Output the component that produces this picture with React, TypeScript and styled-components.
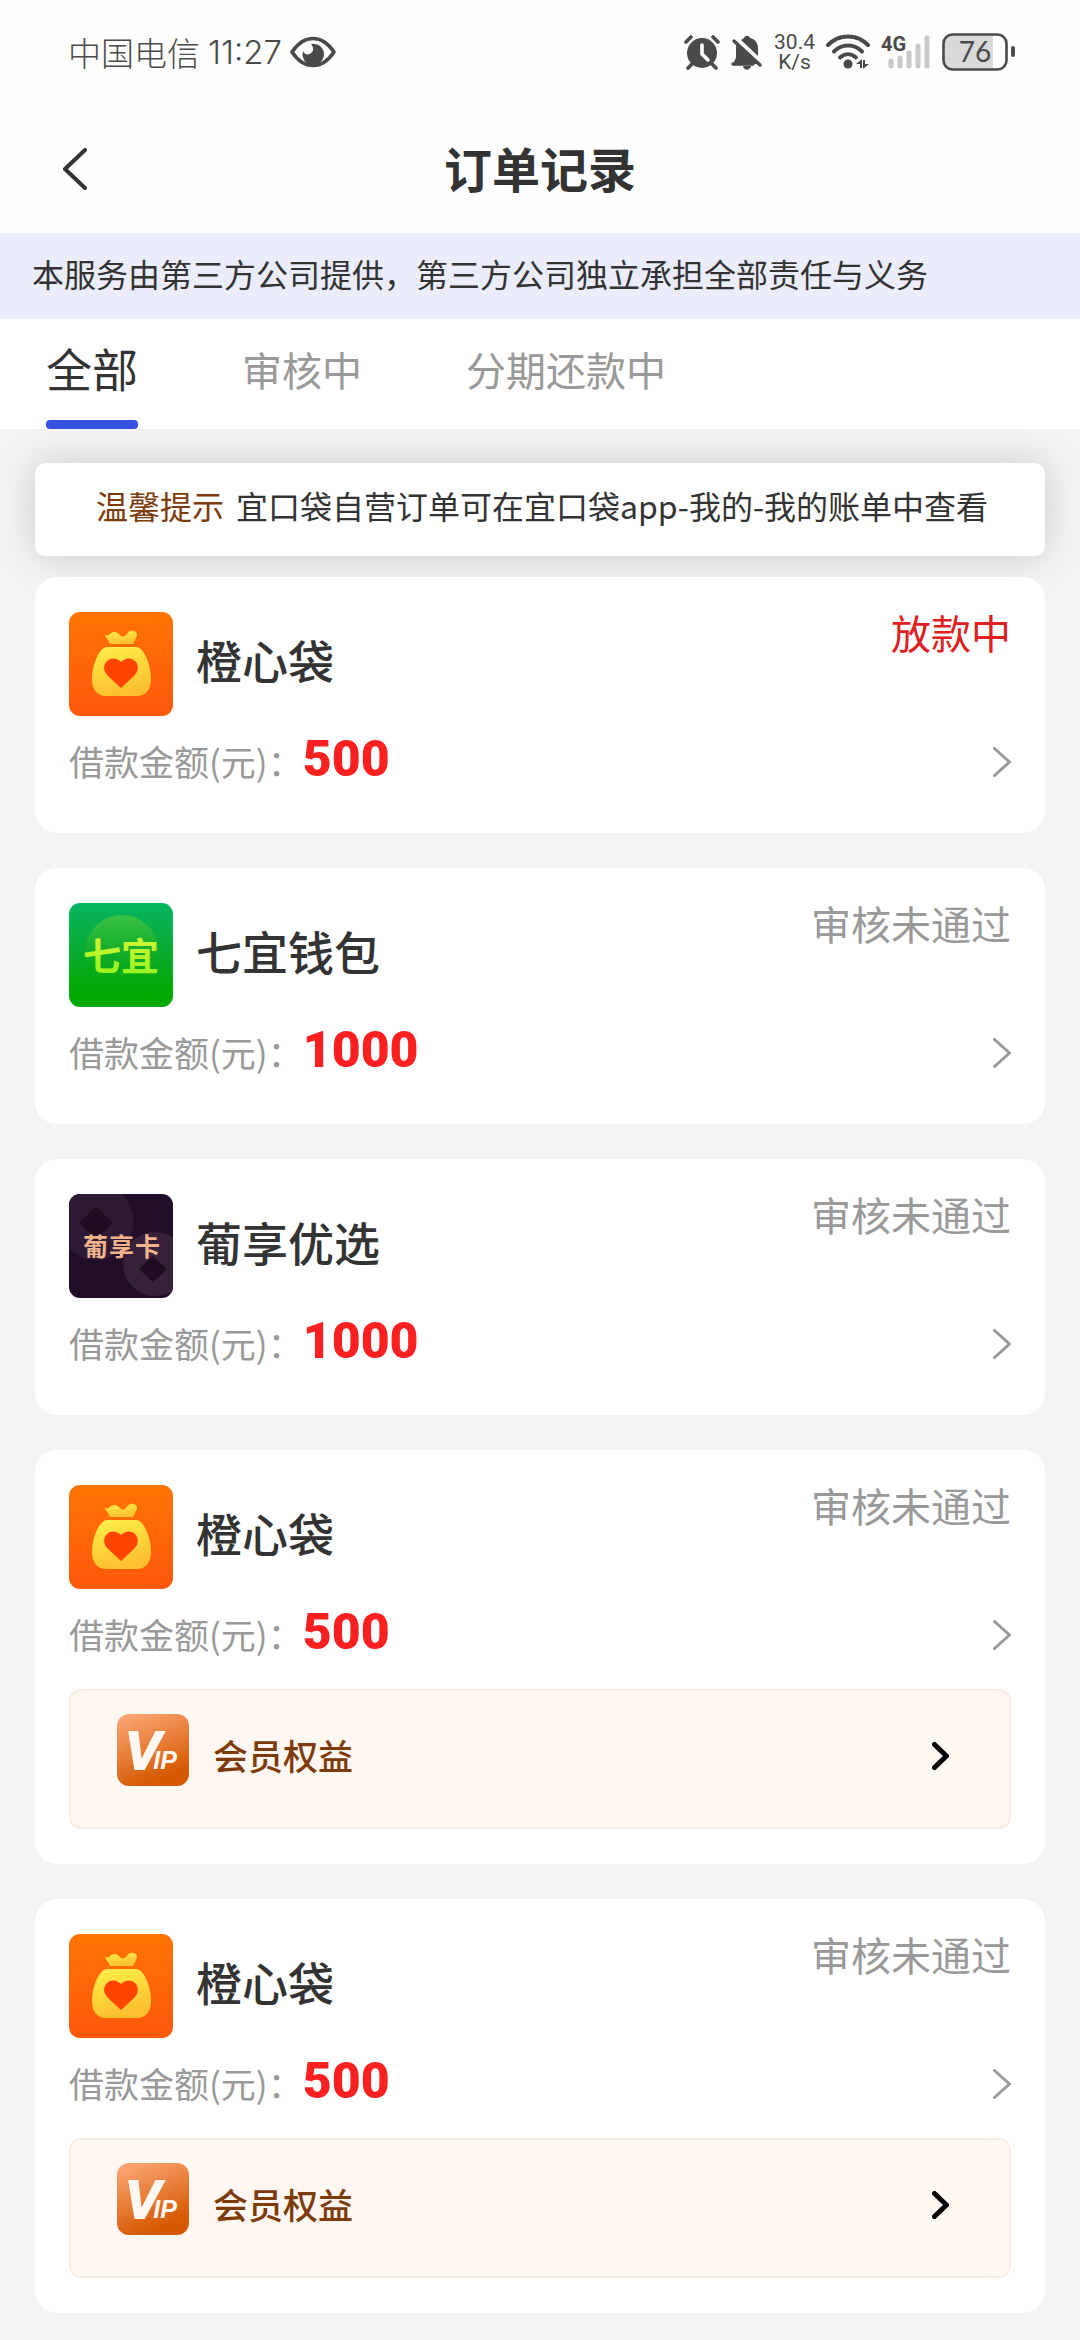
import React, { useState } from "react";
import styled, { createGlobalStyle } from "styled-components";

const GlobalStyle = createGlobalStyle`
  * { box-sizing: border-box; }
  body {
    margin: 0;
    background: #f3f3f3;
    color: #333;
    font-family: "Noto Sans CJK SC", "Noto Sans", sans-serif;
  }
  button {
    margin: 0;
    padding: 0;
    border: 0;
    background: none;
    color: inherit;
    font: inherit;
    cursor: pointer;
  }
  h1, h2, p, ul { margin: 0; padding: 0; }
  svg { display: block; flex: none; }
`;

const StatusBar = styled.div`
  display: flex;
  align-items: center;
  justify-content: space-between;
  height: 104px;
  padding: 0 65px 0 68px;
  background: #fefefe;
  color: #4a4a4a;
`;

const StatusGroup = styled.div<{ $gap: number }>`
  display: flex;
  align-items: center;
  gap: ${(p) => p.$gap}px;
`;

const Carrier = styled.span`
  font-size: 33px;
  font-weight: 300;
  line-height: 40px;
`;

const Clock = styled.span`
  font-family: Inter, Roboto, sans-serif;
  font-size: 33px;
  font-weight: 300;
  line-height: 40px;
`;

const NetSpeed = styled.span`
  display: flex;
  flex-direction: column;
  align-items: center;
  font-family: Roboto, sans-serif;
  font-size: 21px;
  line-height: 20px;
`;

const Header = styled.header`
  display: grid;
  grid-template-columns: 80px 1fr 80px;
  align-items: center;
  height: 129px;
  padding: 0 35px;
  background: #fefefe;
`;

const BackButton = styled.button`
  display: flex;
  align-items: center;
  justify-content: center;
  width: 80px;
  height: 80px;
`;

const Title = styled.h1`
  padding-bottom: 4px;
  font-size: 48px;
  font-weight: 700;
  line-height: 64px;
  text-align: center;
`;

const Notice = styled.p`
  padding: 16px 32px 22px;
  background: #ebedfd;
  font-size: 32px;
  line-height: 48px;
`;

const Tabs = styled.nav`
  display: flex;
  gap: 104px;
  height: 110px;
  padding: 0 46px;
  background: #fff;
`;

const Tab = styled.button<{ $active: boolean }>`
  display: flex;
  flex-direction: column;
  justify-content: space-between;
  padding-top: ${(p) => (p.$active ? 16 : 18)}px;
  color: ${(p) => (p.$active ? "#333" : "#999")};
  font-size: ${(p) => (p.$active ? 46 : 40)}px;
  line-height: 64px;
  white-space: nowrap;

  &::after {
    content: "";
    height: 9px;
    width: 100%;
    border-radius: 4px;
    background: ${(p) => (p.$active ? "#3451e0" : "transparent")};
  }
`;

const Content = styled.main`
  padding: 34px 35px 26px;
  overflow: hidden;
`;

const Tip = styled.p`
  display: flex;
  justify-content: center;
  gap: 12px;
  margin-bottom: 21px;
  padding: 18px 20px 27px 24px;
  border-radius: 10px;
  background: #fff;
  box-shadow: 0 0 40px rgba(0, 0, 0, 0.16);
  font-size: 32px;
  line-height: 48px;
`;

const TipLabel = styled.span`
  color: #7e3b0a;
`;

const OrderList = styled.ul`
  display: flex;
  flex-direction: column;
  gap: 35px;
  list-style: none;
`;

const Card = styled.li`
  padding: 35px 34px;
  border-radius: 22px;
  background: #fff;
`;

const CardHead = styled.div`
  display: flex;
  align-items: flex-start;
`;

const Name = styled.h2`
  flex: 1;
  padding-left: 23px;
  font-size: 46px;
  font-weight: 500;
  line-height: 94px;
`;

const Status = styled.span<{ $urgent: boolean }>`
  color: ${(p) => (p.$urgent ? "#e02020" : "#999")};
  font-size: 40px;
  line-height: 40px;
`;

const AmountRow = styled.div`
  display: flex;
  align-items: center;
  height: 73px;
  margin-top: 9px;
`;

const AmountLabel = styled.span`
  padding-bottom: 2px;
  color: #999;
  font-size: 35px;
  line-height: 64px;
`;

const Amount = styled.strong`
  flex: 1;
  padding-bottom: 6px;
  color: #fc2020;
  font-family: Roboto, sans-serif;
  font-size: 50px;
  font-weight: 900;
  line-height: 64px;
`;

const DetailButton = styled.button`
  display: flex;
  align-items: center;
  justify-content: flex-end;
  width: 60px;
  height: 60px;
`;

const VipButton = styled.button`
  display: flex;
  align-items: flex-start;
  width: 100%;
  height: 140px;
  margin-top: 18px;
  padding: 23px 60px 0 46px;
  border: 2px solid #f9ece3;
  border-radius: 12px;
  background: #fff7f1;
  text-align: left;
`;

const VipLabel = styled.span`
  flex: 1;
  padding: 11px 0 0 24px;
  color: #7e3b0a;
  font-size: 35px;
  font-weight: 500;
  line-height: 60px;
`;

const VipArrow = styled.span`
  display: flex;
  align-items: center;
  height: 84px;
`;

const EyeIcon = () => (
  <svg width="46" height="32" viewBox="0 0 46 32" aria-hidden="true">
    <path d="M2 16C8 7 15 2.5 23 2.5S38 7 44 16C38 25 31 29.5 23 29.5S8 25 2 16Z" fill="none" stroke="currentColor" strokeWidth="3.6" strokeLinejoin="round" />
    <path d="M21 8a10.500 10.500 0 0 1 5 20.500h-6A10.500 10.500 0 0 1 13 15c1 3 4 4 6.500 3 4-1.500 5-6 1.500-10Z" fill="currentColor" />
  </svg>
);

const AlarmIcon = () => (
  <svg width="36" height="35" viewBox="0 0 36 35" aria-hidden="true">
    <circle cx="18" cy="18" r="15" fill="currentColor" />
    <path d="M8 29l-4 4M28 29l4 4M2 7l5-5M34 7l-5-5" stroke="currentColor" strokeWidth="3.600" strokeLinecap="round" fill="none" />
    <path d="M18 10v9l6 6" stroke="#fff" strokeWidth="3.600" strokeLinecap="round" strokeLinejoin="round" fill="none" />
  </svg>
);

const MutedBellIcon = () => (
  <svg width="32" height="35" viewBox="0 0 32 35" aria-hidden="true">
    <path d="M3 29h24L5 10v12c0 2-2 3-2 7Z" fill="currentColor" />
    <path d="M10 5c1-1 2-1 3-2 1-3 5-3 6 0 5 1 8 5 8 10v8Z" fill="currentColor" />
    <path d="M12 31h8c-1 5-7 5-8 0Z" fill="currentColor" />
    <path d="M2 29h20M3 6l26 24" stroke="currentColor" strokeWidth="3.400" strokeLinecap="round" />
  </svg>
);

const WifiIcon = () => (
  <svg width="44" height="36" viewBox="0 0 44 36" aria-hidden="true">
    <g fill="none" stroke="currentColor" strokeWidth="4" strokeLinecap="round">
      <path d="M2 11C13-.500 31-.500 42 11" />
      <path d="M8 17.500c8-8 20-8 28 0" />
      <path d="M14 23.500c5-4.500 11-4.500 16 0" />
    </g>
    <circle cx="22" cy="30" r="4.500" fill="currentColor" />
    <path d="M30 30l6-5v9h-2v-4ZM43 30l-6 5v-9h2v4Z" fill="currentColor" />
  </svg>
);

const SignalIcon = () => (
  <svg width="50" height="49" viewBox="0 -6 50 49" aria-hidden="true">
    <g stroke="#c9c9c9" strokeWidth="5" strokeLinecap="round">
      <path d="M10 27v5M19 24v8M28 19v13M37 12v20M46 4v28" />
    </g>
    <text x="0" y="17" fill="currentColor" fontFamily="Roboto, sans-serif" fontWeight="700" fontSize="20">4G</text>
  </svg>
);

const BatteryIcon = () => (
  <svg width="73" height="38" viewBox="0 0 73 38" aria-hidden="true">
    <path d="M10 2h41v34H10a8 8 0 0 1-8-8V10a8 8 0 0 1 8-8Z" fill="#d9d9d9" />
    <rect x="1.500" y="1.500" width="63" height="35" rx="9" fill="none" stroke="currentColor" strokeWidth="2.600" />
    <rect x="69" y="13" width="4" height="11" rx="2" fill="currentColor" />
    <text x="33" y="29" textAnchor="middle" fill="currentColor" fontFamily="Lato, sans-serif" fontSize="28">76</text>
  </svg>
);

interface ChevronProps {
  width: number;
  height: number;
  stroke: number;
  color: string;
  back?: boolean;
}

const Chevron = ({ width, height, stroke, color, back }: ChevronProps) => {
  const p = stroke / 2;
  const tip = back ? p : width - p;
  const tail = back ? width - p : p;
  return (
    <svg width={width} height={height} viewBox={`0 0 ${width} ${height}`} aria-hidden="true">
      <path
        d={`M${tail} ${p}L${tip} ${height / 2}L${tail} ${height - p}`}
        fill="none"
        stroke={color}
        strokeWidth={stroke}
        strokeLinecap="round"
        strokeLinejoin="round"
      />
    </svg>
  );
};

const BagLogo = () => (
  <svg width="104" height="104" viewBox="0 0 104 104" aria-hidden="true">
    <defs>
      <linearGradient id="bagBg" x1="0" y1="0" x2="0" y2="1">
        <stop offset="0" stopColor="#ff7403" />
        <stop offset="1" stopColor="#ff580c" />
      </linearGradient>
      <linearGradient id="bagFill" x1="0" y1="0" x2="0.300" y2="1">
        <stop offset="0" stopColor="#fff04a" />
        <stop offset="1" stopColor="#fdc02f" />
      </linearGradient>
    </defs>
    <rect width="104" height="104" rx="11" fill="url(#bagBg)" />
    <path d="M36 23c3 1 4 0 6-2 3-2 6-1 8 1 2 3 5 3 7 1 2-4 5-5 8-4 3 1 4 4 2 7l-3 6H41l-2-4c-1-2-3-3-3-5Z" fill="url(#bagFill)" />
    <path d="M38 35h29c3 0 6 3 8 6 4 7 7 16 7 26 0 11-6 17-14 17H37c-8 0-14-6-14-17 0-10 3-19 7-26 2-3 5-6 8-6Z" fill="url(#bagFill)" />
    <path d="M52 76L39 64c-5-5-5-11-1-15 4-4 10-3 14 1 4-4 10-5 14-1 4 4 4 10-1 15Z" fill="#ff4500" />
  </svg>
);

const QiyiLogo = () => (
  <svg width="104" height="104" viewBox="0 0 104 104" aria-hidden="true">
    <defs>
      <linearGradient id="qiyiBg" x1="0" y1="0" x2="0" y2="1">
        <stop offset="0" stopColor="#06b562" />
        <stop offset="0.500" stopColor="#08aa2c" />
        <stop offset="0.850" stopColor="#02a902" />
      </linearGradient>
      <linearGradient id="qiyiMoon" x1="0" y1="0" x2="0" y2="1">
        <stop offset="0" stopColor="#3cc245" />
        <stop offset="0.600" stopColor="#18ab20" stopOpacity="0.500" />
        <stop offset="1" stopColor="#02a902" stopOpacity="0" />
      </linearGradient>
      <linearGradient id="qiyiText" x1="0" y1="0" x2="0" y2="1">
        <stop offset="0" stopColor="#e6f53a" />
        <stop offset="1" stopColor="#8cf51e" />
      </linearGradient>
    </defs>
    <rect width="104" height="104" rx="11" fill="url(#qiyiBg)" />
    <circle cx="53" cy="49" r="37" fill="url(#qiyiMoon)" />
    <text x="52" y="67" textAnchor="middle" fill="url(#qiyiText)" fontFamily="Noto Sans CJK SC, sans-serif" fontWeight="700" fontSize="38">七宜</text>
  </svg>
);

const PuxiangLogo = () => (
  <svg width="104" height="104" viewBox="0 0 104 104" aria-hidden="true">
    <defs>
      <clipPath id="puClip">
        <rect width="104" height="104" rx="11" />
      </clipPath>
    </defs>
    <g clipPath="url(#puClip)">
      <rect width="104" height="104" fill="#220e28" />
      <circle cx="27" cy="28" r="38" fill="#2e1a35" />
      <circle cx="86" cy="70" r="32" fill="#372039" />
      <path d="M27 12l17 17-17 17-17-17ZM84 62l14 13-14 13-14-13Z" fill="#1f0c22" />
      <g fill="#f3b48c" fontFamily="Noto Sans CJK SC, sans-serif" fontWeight="700" fontSize="25">
        <text x="14" y="62">葡</text>
        <text x="40" y="62">享</text>
        <text x="66" y="62">卡</text>
      </g>
    </g>
  </svg>
);

const VipLogo = () => (
  <svg width="72" height="72" viewBox="0 0 72 72" aria-hidden="true">
    <defs>
      <linearGradient id="vipBg" x1="0.200" y1="0" x2="0.600" y2="1">
        <stop offset="0" stopColor="#fba573" />
        <stop offset="0.900" stopColor="#d65a03" />
      </linearGradient>
    </defs>
    <rect width="72" height="72" rx="12" fill="url(#vipBg)" />
    <text x="8" y="55" fill="#fff7f1" stroke="#fff7f1" strokeWidth="2" fontFamily="Liberation Sans, sans-serif" fontWeight="700" fontStyle="italic" fontSize="53">
      V<tspan dx="-7" fontSize="25" strokeWidth="0">IP</tspan>
    </text>
  </svg>
);

type Brand = "bag" | "qiyi" | "puxiang";

const logos: Record<Brand, () => React.JSX.Element> = {
  bag: BagLogo,
  qiyi: QiyiLogo,
  puxiang: PuxiangLogo,
};

interface Order {
  brand: Brand;
  name: string;
  amount: number;
  status: string;
  urgent?: boolean;
  vip?: boolean;
}

const orders: Order[] = [
  { brand: "bag", name: "橙心袋", amount: 500, status: "放款中", urgent: true },
  { brand: "qiyi", name: "七宜钱包", amount: 1000, status: "审核未通过" },
  { brand: "puxiang", name: "葡享优选", amount: 1000, status: "审核未通过" },
  { brand: "bag", name: "橙心袋", amount: 500, status: "审核未通过", vip: true },
  { brand: "bag", name: "橙心袋", amount: 500, status: "审核未通过", vip: true },
];

const tabNames = ["全部", "审核中", "分期还款中"];

const OrderCard = ({ order }: { order: Order }) => {
  const Logo = logos[order.brand];
  return (
    <Card>
      <CardHead>
        <Logo />
        <Name>{order.name}</Name>
        <Status $urgent={!!order.urgent}>{order.status}</Status>
      </CardHead>
      <AmountRow>
        <AmountLabel>借款金额(元)：</AmountLabel>
        <Amount>{order.amount}</Amount>
        <DetailButton aria-label="查看详情">
          <Chevron width={18} height={30} stroke={3} color="#999" />
        </DetailButton>
      </AmountRow>
      {order.vip && (
        <VipButton>
          <VipLogo />
          <VipLabel>会员权益</VipLabel>
          <VipArrow>
            <Chevron width={17} height={28} stroke={5} color="#000" />
          </VipArrow>
        </VipButton>
      )}
    </Card>
  );
};

export default function App() {
  const [active, setActive] = useState(0);
  return (
    <>
      <GlobalStyle />
      <StatusBar>
        <StatusGroup $gap={8}>
          <Carrier>中国电信</Carrier>
          <Clock>11:27</Clock>
          <EyeIcon />
        </StatusGroup>
        <StatusGroup $gap={11}>
          <AlarmIcon />
          <MutedBellIcon />
          <NetSpeed>
            <span>30.4</span>
            <span>K/s</span>
          </NetSpeed>
          <WifiIcon />
          <SignalIcon />
          <BatteryIcon />
        </StatusGroup>
      </StatusBar>
      <Header>
        <BackButton aria-label="返回">
          <Chevron width={24} height={42} stroke={4} color="#333" back />
        </BackButton>
        <Title>订单记录</Title>
      </Header>
      <Notice>本服务由第三方公司提供，第三方公司独立承担全部责任与义务</Notice>
      <Tabs>
        {tabNames.map((name, i) => (
          <Tab key={name} $active={i === active} onClick={() => setActive(i)}>
            {name}
          </Tab>
        ))}
      </Tabs>
      <Content>
        <Tip>
          <TipLabel>温馨提示</TipLabel>
          <span>宜口袋自营订单可在宜口袋app-我的-我的账单中查看</span>
        </Tip>
        <OrderList>
          {orders.map((order, i) => (
            <OrderCard key={i} order={order} />
          ))}
        </OrderList>
      </Content>
    </>
  );
}
